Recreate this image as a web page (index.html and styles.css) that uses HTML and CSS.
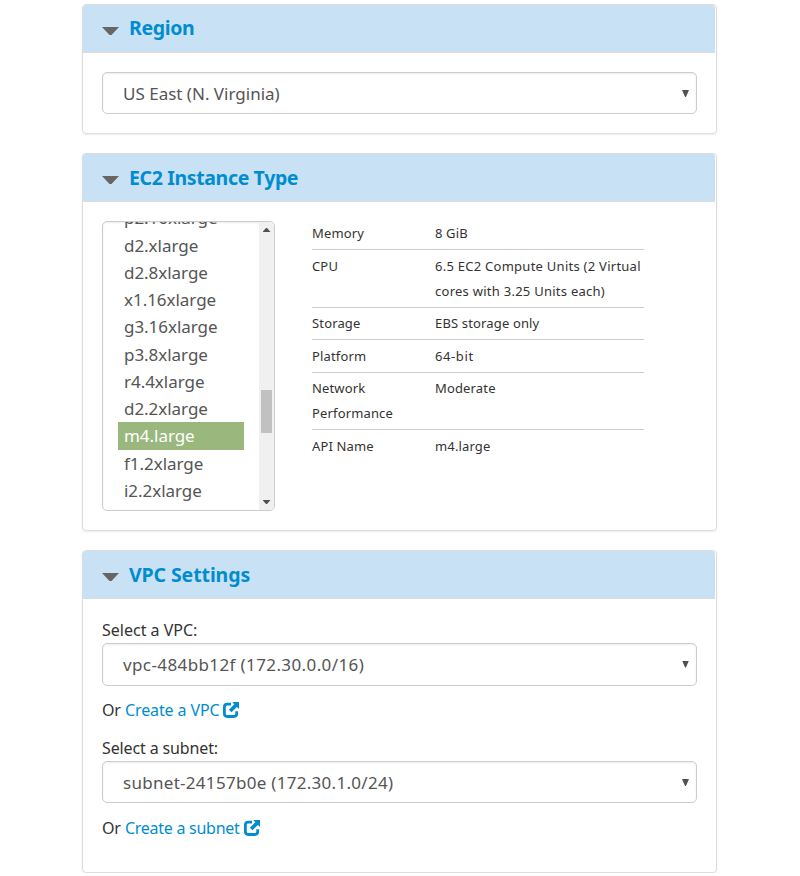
FILE: index.html
```html
<!DOCTYPE html>
<html lang="en">
<head>
<meta charset="utf-8">
<title>Launch settings</title>
<link rel="stylesheet" href="styles.css">
</head>
<body>
<svg class="defs" width="0" height="0" aria-hidden="true">
  <symbol id="external" viewBox="0 0 18 18">
    <path d="M9 3.1H5.2Q2.4 3.1 2.4 5.8V12.6Q2.4 15.5 5.2 15.5H11.8Q14.7 15.5 14.7 12.6V10.3" fill="none" stroke="currentColor" stroke-width="2.8"/>
    <path d="M10.3 1H17V7.9L14.9 5.9L9.5 11.3L6.9 8.7L12.3 3.2Z" fill="currentColor"/>
  </symbol>
</svg>
<main class="page">
  <section class="panel region">
    <header class="panel-head"><i class="caret"></i><h2 class="t-region">Region</h2></header>
    <div class="panel-body">
      <div class="select"><span class="v-region">US East (N. Virginia)</span><i class="arrow"></i></div>
    </div>
  </section>

  <section class="panel instance">
    <header class="panel-head"><i class="caret"></i><h2 class="t-instance">EC2 Instance Type</h2></header>
    <div class="panel-body columns">
      <div class="listbox">
        <ul class="options">
          <li>p2.16xlarge</li>
          <li>d2.xlarge</li>
          <li>d2.8xlarge</li>
          <li>x1.16xlarge</li>
          <li>g3.16xlarge</li>
          <li>p3.8xlarge</li>
          <li>r4.4xlarge</li>
          <li>d2.2xlarge</li>
          <li class="selected">m4.large</li>
          <li>f1.2xlarge</li>
          <li>i2.2xlarge</li>
        </ul>
        <div class="scrollbar"><i class="up"></i><i class="thumb"></i><i class="down"></i></div>
      </div>
      <dl class="specs">
        <div><dt>Memory</dt><dd>8 GiB</dd></div>
        <div><dt>CPU</dt><dd class="wide">6.5 EC2 Compute Units (2 Virtual<br>cores with 3.25 Units each)</dd></div>
        <div class="tight"><dt>Storage</dt><dd>EBS storage only</dd></div>
        <div><dt>Platform</dt><dd class="bits">64-bit</dd></div>
        <div class="tight"><dt>Network<br>Performance</dt><dd>Moderate</dd></div>
        <div><dt>API Name</dt><dd>m4.large</dd></div>
      </dl>
    </div>
  </section>

  <section class="panel vpc">
    <header class="panel-head"><i class="caret"></i><h2 class="t-vpc">VPC Settings</h2></header>
    <div class="panel-body">
      <div class="label">Select a VPC:</div>
      <div class="select tall"><span class="v-vpc">vpc-484bb12f (172.30.0.0/16)</span><i class="arrow"></i></div>
      <div class="create first"><span>Or</span><a class="l-vpc">Create a VPC</a><svg class="ext"><use href="#external"/></svg></div>
      <div class="label l-sub">Select a subnet:</div>
      <div class="select"><span class="v-subnet">subnet-24157b0e (172.30.1.0/24)</span><i class="arrow"></i></div>
      <div class="create"><span>Or</span><a class="l-subnet">Create a subnet</a><svg class="ext"><use href="#external"/></svg></div>
    </div>
  </section>
</main>
</body>
</html>
```
FILE: styles.css
```css
* { box-sizing: border-box; }
body {
  margin: 0;
  background: #fff;
  color: #333;
  font-family: "Noto Sans", sans-serif;
  font-size: 16px;
}
.defs { display: block; }
.page {
  width: 635px;
  margin-left: 82px;
  padding-top: 4px;
  display: flex;
  flex-direction: column;
  gap: 19px;
}
.panel {
  border: 1px solid #ddd;
  border-radius: 4px;
  padding-right: 1px;
  box-shadow: 0 1px 2px rgba(0, 0, 0, .08);
}
.region { height: 130px; }
.instance { height: 378px; }
.vpc { height: 323px; }
.panel-head {
  height: 48px;
  display: flex;
  align-items: center;
  padding-left: 19px;
  background: #c9e1f5;
  border-bottom: 1px solid #ddd;
  border-radius: 3px 3px 0 0;
}
.caret {
  width: 17px;
  height: 8px;
  margin: 5px 10px 0 0;
  background: #666;
  clip-path: polygon(0 0, 100% 0, 56% 100%, 44% 100%);
}
h2 {
  margin: 0;
  font-size: 19.5px;
  line-height: 28px;
  font-weight: 700;
  color: #008dd0;
  white-space: nowrap;
}
.t-region { letter-spacing: -.35px; margin-bottom: 2px; }
.t-instance { letter-spacing: -.36px; }
.t-vpc { letter-spacing: -.1px; }
.v-vpc { letter-spacing: .39px; }
.v-subnet { letter-spacing: .29px; }
.panel-body { padding: 19px 18px 0 19px; }
.select {
  height: 42px;
  display: flex;
  align-items: center;
  justify-content: space-between;
  padding: 1px 7px 0 20px;
  border: 1px solid #ccc;
  border-radius: 5px;
  box-shadow: inset 0 1px 2px rgba(0, 0, 0, .08);
  color: #555;
  font-size: 17px;
  line-height: 24px;
}
.tall { height: 43px; }
.tall .arrow { margin-bottom: 2px; }
.arrow {
  width: 7px;
  height: 7px;
  background: #505050;
  clip-path: polygon(0 0, 100% 0, 56% 100%, 44% 100%);
}
.columns { display: flex; }
.listbox {
  width: 173px;
  height: 290px;
  display: flex;
  justify-content: space-between;
  border: 1px solid #ccc;
  border-radius: 5px;
  overflow: hidden;
  box-shadow: inset 0 1px 2px rgba(0, 0, 0, .08);
  color: #555;
}
.options {
  list-style: none;
  width: 126px;
  margin: -17.7px 0 0 15px;
  padding: 0;
  font-size: 17px;
  letter-spacing: -.04px;
}
.options li { height: 27.25px; line-height: 28px; padding-left: 6px; }
.options .selected { background: #9ab87d; color: #fff; height: 28px; margin-bottom: -.75px; }
.scrollbar {
  width: 15px;
  height: 288px;
  background: #f0f0f0;
  display: flex;
  flex-direction: column;
  align-items: center;
  padding: 6px 0;
}
.up, .down { width: 8px; height: 4px; background: #505050; }
.up { clip-path: polygon(44% 0, 56% 0, 100% 100%, 0 100%); }
.down { clip-path: polygon(0 0, 100% 0, 56% 100%, 44% 100%); margin-top: auto; }
.thumb { width: 11px; height: 43px; margin-top: 158px; background: #c1c1c1; }
.specs {
  width: 332px;
  margin: -4px 0 0 37px;
  font-size: 13px;
  line-height: 25px;
  letter-spacing: .15px;
}
.specs div { display: flex; padding: 4px 0 3px; border-bottom: 1px solid #ccc; }
.specs .tight { padding-top: 3px; }
.specs div:last-child { border-bottom: 0; }
.specs dt { width: 123px; }
.specs dd { margin: 0; white-space: nowrap; }
.specs .wide { letter-spacing: .26px; }
.specs .bits { letter-spacing: .6px; }
.label { margin-top: 1px; height: 24px; line-height: 23px; }
.l-sub { letter-spacing: -.13px; }
.create {
  height: 50px;
  display: flex;
  align-items: center;
  line-height: 24px;
}
.first { padding-bottom: 2px; }
.create span { width: 23px; letter-spacing: -.2px; }
.create a { color: #008dd0; white-space: nowrap; }
.l-vpc { letter-spacing: -.12px; }
.l-subnet { letter-spacing: -.27px; }
.ext { width: 18px; height: 18px; margin: 0 0 1px 3px; color: #008dd0; }
```
